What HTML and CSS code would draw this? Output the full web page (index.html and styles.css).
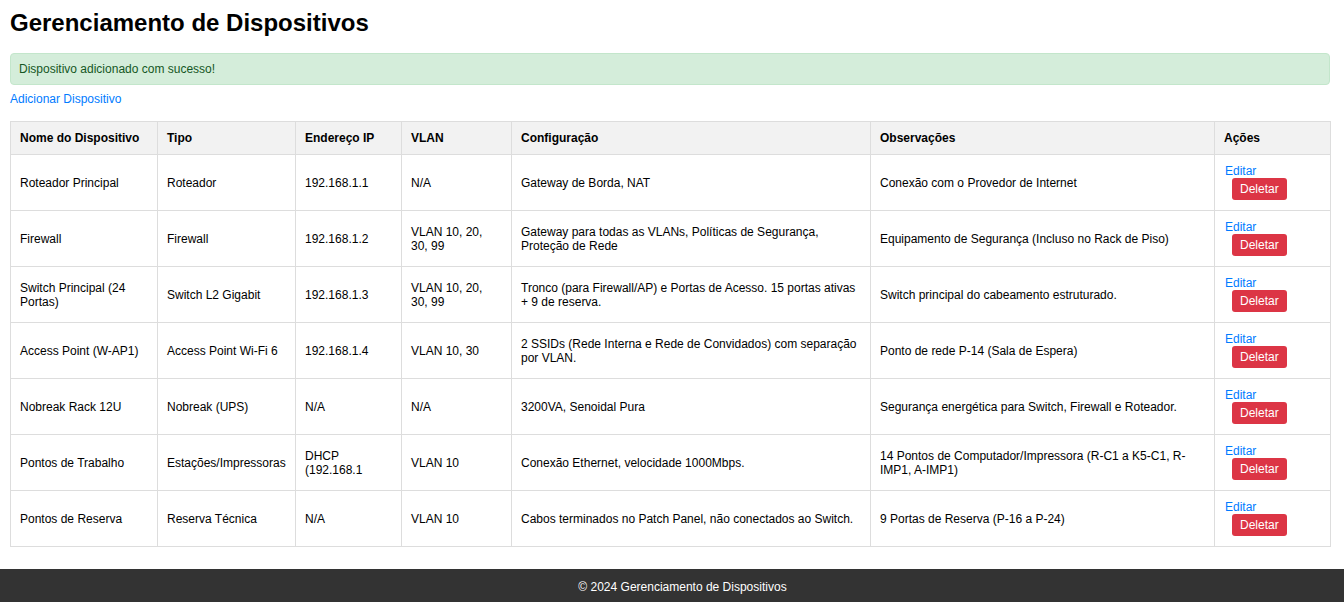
FILE: index.html
```html
<!DOCTYPE html>
<html lang="pt-BR">
<head>
<meta charset="utf-8">
<title>Gerenciamento de Dispositivos</title>
<link rel="stylesheet" href="styles.css">
</head>
<body>
<main class="container">
  <h1 class="title">Gerenciamento de Dispositivos</h1>
  <div class="alert">Dispositivo adicionado com sucesso!</div>
  <a class="add-link" href="#">Adicionar Dispositivo</a>
  <table class="devices">
    <thead>
      <tr>
        <th class="c-name">Nome do Dispositivo</th>
        <th class="c-type">Tipo</th>
        <th class="c-ip">Endereço IP</th>
        <th class="c-vlan">VLAN</th>
        <th class="c-conf">Configuração</th>
        <th class="c-obs">Observações</th>
        <th class="c-act">Ações</th>
      </tr>
    </thead>
    <tbody>
      <tr>
        <td>Roteador Principal</td><td>Roteador</td><td>192.168.1.1</td><td>N/A</td>
        <td>Gateway de Borda, NAT</td><td>Conexão com o Provedor de Internet</td>
        <td class="actions"><a href="#">Editar</a> <button class="btn-del">Deletar</button></td>
      </tr>
      <tr>
        <td>Firewall</td><td>Firewall</td><td>192.168.1.2</td><td>VLAN 10, 20, 30, 99</td>
        <td>Gateway para todas as VLANs, Políticas de Segurança, Proteção de Rede</td><td>Equipamento de Segurança (Incluso no Rack de Piso)</td>
        <td class="actions"><a href="#">Editar</a> <button class="btn-del">Deletar</button></td>
      </tr>
      <tr>
        <td>Switch Principal (24 Portas)</td><td>Switch L2 Gigabit</td><td>192.168.1.3</td><td>VLAN 10, 20, 30, 99</td>
        <td>Tronco (para Firewall/AP) e Portas de Acesso. 15 portas ativas + 9 de reserva.</td><td>Switch principal do cabeamento estruturado.</td>
        <td class="actions"><a href="#">Editar</a> <button class="btn-del">Deletar</button></td>
      </tr>
      <tr>
        <td>Access Point (W-AP1)</td><td>Access Point Wi-Fi 6</td><td>192.168.1.4</td><td>VLAN 10, 30</td>
        <td>2 SSIDs (Rede Interna e Rede de Convidados) com separação por VLAN.</td><td>Ponto de rede P-14 (Sala de Espera)</td>
        <td class="actions"><a href="#">Editar</a> <button class="btn-del">Deletar</button></td>
      </tr>
      <tr>
        <td>Nobreak Rack 12U</td><td>Nobreak (UPS)</td><td>N/A</td><td>N/A</td>
        <td>3200VA, Senoidal Pura</td><td>Segurança energética para Switch, Firewall e Roteador.</td>
        <td class="actions"><a href="#">Editar</a> <button class="btn-del">Deletar</button></td>
      </tr>
      <tr>
        <td>Pontos de Trabalho</td><td>Estações/Impressoras</td><td>DHCP (192.168.1</td><td>VLAN 10</td>
        <td>Conexão Ethernet, velocidade 1000Mbps.</td><td>14 Pontos de Computador/Impressora (R-C1 a K5-C1, R-IMP1, A-IMP1)</td>
        <td class="actions"><a href="#">Editar</a> <button class="btn-del">Deletar</button></td>
      </tr>
      <tr>
        <td>Pontos de Reserva</td><td>Reserva Técnica</td><td>N/A</td><td>VLAN 10</td>
        <td>Cabos terminados no Patch Panel, não conectados ao Switch.</td><td>9 Portas de Reserva (P-16 a P-24)</td>
        <td class="actions"><a href="#">Editar</a> <button class="btn-del">Deletar</button></td>
      </tr>
    </tbody>
  </table>
</main>
<footer class="footer">© 2024 Gerenciamento de Dispositivos</footer>
</body>
</html>
```

FILE: styles.css
```css
html, body {
  margin: 0;
  padding: 0;
  background: #fff;
  font-family: "Liberation Sans", Arial, sans-serif;
  font-size: 12px;
  color: #000;
}

.container {
  padding: 9px 14px 0 10px;
}

.title {
  font-size: 24px;
  font-weight: bold;
  margin: 0 0 16px;
  line-height: 28px;
}

.alert {
  background: #d4edda;
  border: 1px solid #c3e6cb;
  color: #155724;
  border-radius: 4px;
  padding: 8px;
  line-height: 14px;
  margin-bottom: 7px;
}

.add-link {
  display: block;
  color: #007bff;
  text-decoration: none;
  line-height: 14px;
  margin-bottom: 15px;
}

.devices {
  width: 100%;
  border-collapse: collapse;
  table-layout: fixed;
}

.devices th,
.devices td {
  box-sizing: border-box;
  border: 1px solid #ddd;
  padding: 9px;
  text-align: left;
  vertical-align: middle;
  line-height: 14px;
}

.devices th {
  background: #f2f2f2;
  font-weight: bold;
  height: 33px;
}

.devices td {
  height: 56px;
}

.c-name { width: 147px; }
.c-type { width: 138px; }
.c-ip { width: 106px; }
.c-vlan { width: 110px; }
.c-conf { width: 359px; }
.c-obs { width: 344px; }
.c-act { width: 116px; }

.devices td.actions {
  padding: 8px 9px 10px 10px;
}

.actions a {
  color: #007bff;
  text-decoration: none;
}

.btn-del {
  background: #dc3545;
  color: #fff;
  border: none;
  border-radius: 3px;
  font-family: "Liberation Sans", Arial, sans-serif;
  font-size: 12px;
  font-weight: normal;
  line-height: 14px;
  padding: 4px 8px;
  margin: 0 0 0 7px;
  vertical-align: middle;
  cursor: pointer;
}

.footer {
  margin-top: 22px;
  background: #333;
  color: #fff;
  text-align: center;
  padding: 11px 0 11px 21px;
  line-height: 14px;
}
```
